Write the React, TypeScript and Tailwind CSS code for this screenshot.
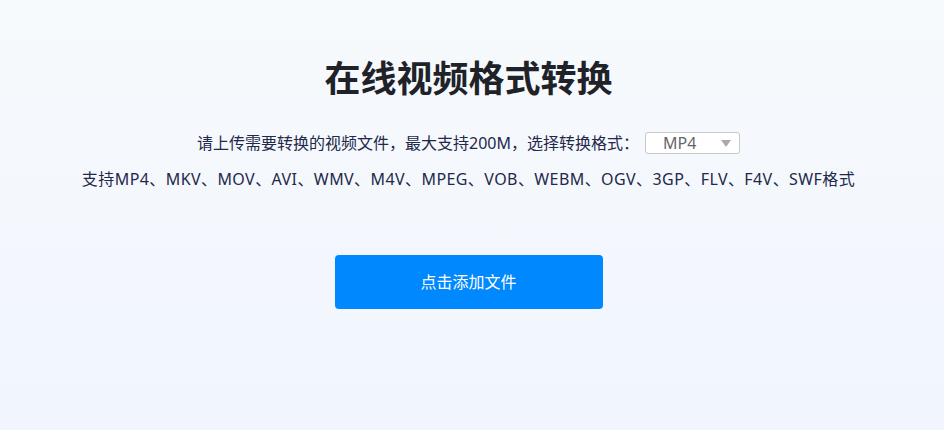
export default function App() {
  const formats = ['MP4', 'MKV', 'MOV', 'AVI', 'WMV', 'M4V', 'MPEG', 'VOB', 'WEBM', 'OGV', '3GP', 'FLV', 'F4V', 'SWF'];
  return (
    <div
      className="w-full h-[430px] pr-[7px] flex flex-col items-center bg-gradient-to-b from-[#f7fafc] to-[#f1f5fe] text-[#23284a]"
      style={{ fontFamily: '"Noto Sans", "Noto Sans CJK SC", sans-serif' }}
    >
      <h1
        className="mt-[53px] text-[36px] leading-[46px] font-bold text-[#1f2329]"
        style={{ fontFamily: '"Noto Sans CJK SC", sans-serif' }}
      >
        在线视频格式转换
      </h1>
      <div className="mt-[32px] flex items-center text-[16px] leading-[24px]">
        <span>请上传需要转换的视频文件，最大支持200M，选择转换格式：</span>
        <div className="ml-[6px] w-[95px] h-[22px] border border-[#c8c8c8] rounded-[3px] bg-white flex items-center justify-between pl-[17px] pr-[8px] text-[#666]">
          <span className="text-[16px] leading-none">MP4</span>
          <svg width="10" height="7" viewBox="0 0 10 7">
            <path d="M0 0h10L5 7z" fill="#aaa" />
          </svg>
        </div>
      </div>
      <p className="mt-[12px] text-[16px] leading-[24px] tracking-[0.42px]">
        支持{formats.join('、')}格式
      </p>
      <button className="mt-[64px] w-[268px] h-[54px] rounded-[4px] bg-[#0088ff] text-white text-[16px]">
        点击添加文件
      </button>
    </div>
  );
}
